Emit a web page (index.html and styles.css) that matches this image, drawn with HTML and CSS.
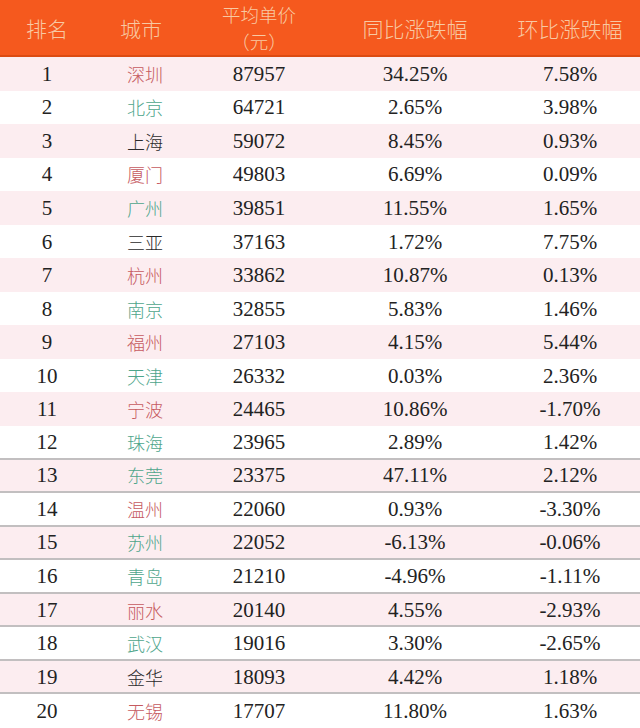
FILE: index.html
```html
<!DOCTYPE html>
<html lang="zh">
<head>
<meta charset="utf-8">
<link rel="stylesheet" href="styles.css">
</head>
<body>
<div class="table">
  <div class="head">
    <div class="hc">排名</div>
    <div class="hc">城市</div>
    <div class="hc two"><span>平均单价</span><span>（元）</span></div>
    <div class="hc">同比涨跌幅</div>
    <div class="hc">环比涨跌幅</div>
  </div>
  <div class="row odd"><div class="c num">1</div><div class="c city red">深圳</div><div class="c num">87957</div><div class="c num">34.25%</div><div class="c num">7.58%</div></div>
  <div class="row"><div class="c num">2</div><div class="c city green">北京</div><div class="c num">64721</div><div class="c num">2.65%</div><div class="c num">3.98%</div></div>
  <div class="row odd"><div class="c num">3</div><div class="c city black">上海</div><div class="c num">59072</div><div class="c num">8.45%</div><div class="c num">0.93%</div></div>
  <div class="row"><div class="c num">4</div><div class="c city red">厦门</div><div class="c num">49803</div><div class="c num">6.69%</div><div class="c num">0.09%</div></div>
  <div class="row odd"><div class="c num">5</div><div class="c city green">广州</div><div class="c num">39851</div><div class="c num">11.55%</div><div class="c num">1.65%</div></div>
  <div class="row"><div class="c num">6</div><div class="c city black">三亚</div><div class="c num">37163</div><div class="c num">1.72%</div><div class="c num">7.75%</div></div>
  <div class="row odd"><div class="c num">7</div><div class="c city red">杭州</div><div class="c num">33862</div><div class="c num">10.87%</div><div class="c num">0.13%</div></div>
  <div class="row"><div class="c num">8</div><div class="c city green">南京</div><div class="c num">32855</div><div class="c num">5.83%</div><div class="c num">1.46%</div></div>
  <div class="row odd"><div class="c num">9</div><div class="c city red">福州</div><div class="c num">27103</div><div class="c num">4.15%</div><div class="c num">5.44%</div></div>
  <div class="row"><div class="c num">10</div><div class="c city green">天津</div><div class="c num">26332</div><div class="c num">0.03%</div><div class="c num">2.36%</div></div>
  <div class="row odd"><div class="c num">11</div><div class="c city red">宁波</div><div class="c num">24465</div><div class="c num">10.86%</div><div class="c num">-1.70%</div></div>
  <div class="row lined"><div class="c num">12</div><div class="c city green">珠海</div><div class="c num">23965</div><div class="c num">2.89%</div><div class="c num">1.42%</div></div>
  <div class="row odd lined"><div class="c num">13</div><div class="c city green">东莞</div><div class="c num">23375</div><div class="c num">47.11%</div><div class="c num">2.12%</div></div>
  <div class="row lined"><div class="c num">14</div><div class="c city red">温州</div><div class="c num">22060</div><div class="c num">0.93%</div><div class="c num">-3.30%</div></div>
  <div class="row odd lined"><div class="c num">15</div><div class="c city green">苏州</div><div class="c num">22052</div><div class="c num">-6.13%</div><div class="c num">-0.06%</div></div>
  <div class="row lined"><div class="c num">16</div><div class="c city green">青岛</div><div class="c num">21210</div><div class="c num">-4.96%</div><div class="c num">-1.11%</div></div>
  <div class="row odd lined"><div class="c num">17</div><div class="c city red">丽水</div><div class="c num">20140</div><div class="c num">4.55%</div><div class="c num">-2.93%</div></div>
  <div class="row lined"><div class="c num">18</div><div class="c city green">武汉</div><div class="c num">19016</div><div class="c num">3.30%</div><div class="c num">-2.65%</div></div>
  <div class="row odd lined"><div class="c num">19</div><div class="c city black">金华</div><div class="c num">18093</div><div class="c num">4.42%</div><div class="c num">1.18%</div></div>
  <div class="row"><div class="c num">20</div><div class="c city red">无锡</div><div class="c num">17707</div><div class="c num">11.80%</div><div class="c num">1.63%</div></div>
</div>
</body>
</html>
```

FILE: styles.css
```css
html, body {
  margin: 0;
  padding: 0;
  background: #ffffff;
}

.table {
  width: 640px;
  height: 728px;
  display: flex;
  flex-direction: column;
  overflow: hidden;
}

.head,
.row {
  display: grid;
  grid-template-columns: 94px 94px 142px 170px 140px;
  align-items: center;
}

.head {
  height: 55px;
  background: #f5591e;
  border-bottom: 2px solid #dc4b12;
  flex: none;
}

.hc {
  text-align: center;
  color: #f8c9a3;
  font-family: "Noto Sans CJK SC", sans-serif;
  font-size: 21px;
  font-weight: 300;
  line-height: 30px;
}

.hc.two {
  display: flex;
  flex-direction: column;
  align-items: center;
  font-size: 18.5px;
  line-height: 27px;
}

.row {
  height: 33.55px;
  flex: none;
  box-sizing: border-box;
}

.row.odd {
  background: #fcedf0;
}

.row.lined {
  border-bottom: 2px solid #c2bfc0;
}

.c {
  text-align: center;
  color: #222222;
}

.num {
  font-family: "Liberation Serif", "Times New Roman", serif;
  font-size: 21px;
  line-height: 26px;
}

.city {
  font-family: "Noto Sans CJK SC", sans-serif;
  font-size: 18px;
  font-weight: 300;
  line-height: 26px;
  padding-left: 8px;
}

.red { color: #c65a5f; }
.green { color: #4ea58b; }
.black { color: #2a2a2a; }
```
